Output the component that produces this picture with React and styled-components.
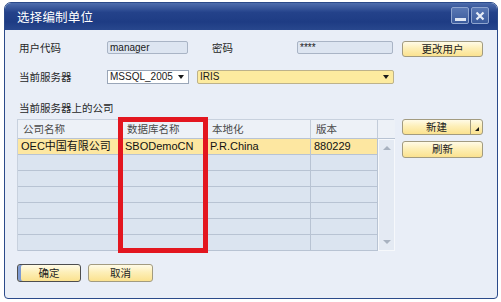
import styled, { createGlobalStyle } from "styled-components";

const GlobalStyle = createGlobalStyle`
  html, body {
    margin: 0;
    padding: 0;
    background: #ffffff;
  }
  body {
    font-family: "Liberation Sans", "Noto Sans CJK SC", sans-serif;
    font-size: 11px;
    color: #1a1a1a;
  }
`;

const companies = [
  { name: "OEC中国有限公司", db: "SBODemoCN", locale: "P.R.China", version: "880229" },
];
const EMPTY_ROWS = 6;

export default function App() {
  return (
    <>
      <GlobalStyle />
      <Window>
        <TitleBar>
          <Title>选择编制单位</Title>
          <Controls>
            <CtrlBox>
              <MinBar />
            </CtrlBox>
            <CtrlBox>
              <svg width="10" height="10" viewBox="0 0 10 10">
                <path d="M1.5 1.5 L8.5 8.5 M8.5 1.5 L1.5 8.5" stroke="#e8eef8" strokeWidth="2.2" />
              </svg>
            </CtrlBox>
          </Controls>
        </TitleBar>

        <Body>
          <Line $top={0}>
            <Fields>
              <Label>用户代码</Label>
              <ReadOnly $w={81}>manager</ReadOnly>
              <Label $w={87} $left={22}>密码</Label>
              <ReadOnly $w={96}>****</ReadOnly>
            </Fields>
            <Button>更改用户</Button>
          </Line>

          <Line $top={13}>
            <Fields>
              <Label $h={14}>当前服务器</Label>
              <Select>
                MSSQL_2005
                <Arrow />
              </Select>
              <YellowField>
                IRIS
                <Arrow />
              </YellowField>
            </Fields>
          </Line>

          <Line $top={17}>
            <Label $h={14}>当前服务器上的公司</Label>
          </Line>

          <Line $top={4}>
            <Table>
              <HeadCell>公司名称</HeadCell>
              <HeadCell>数据库名称</HeadCell>
              <HeadCell>本地化</HeadCell>
              <HeadCell>版本</HeadCell>
              <HeadCell $last />
              {companies.map((c) => (
                <>
                  <Cell key={c.db + "1"} $selected $col={1}>{c.name}</Cell>
                  <Cell key={c.db + "2"} $selected $col={2}>{c.db}</Cell>
                  <Cell key={c.db + "3"} $selected $col={3}>{c.locale}</Cell>
                  <Cell key={c.db + "4"} $selected $col={4}>{c.version}</Cell>
                </>
              ))}
              {Array.from({ length: EMPTY_ROWS }).map((_, i) => (
                <>
                  <Cell key={i + "a"} $col={1} />
                  <Cell key={i + "b"} $col={2} />
                  <Cell key={i + "c"} $col={3} />
                  <Cell key={i + "d"} $col={4} />
                </>
              ))}
              <Scrollbar>
                <ScrollArrow $up />
                <ScrollArrow />
              </Scrollbar>
              <RedMark />
            </Table>
            <SideButtons>
              <SplitButton>
                <span>新建</span>
                <SplitPart>
                  <Corner />
                </SplitPart>
              </SplitButton>
              <Button $h={17}>刷新</Button>
            </SideButtons>
          </Line>

          <Footer>
            <Button $w={64} $h={18} $focused>确定</Button>
            <Button $w={65} $h={18}>取消</Button>
          </Footer>
        </Body>
      </Window>
    </>
  );
}

const Window = styled.div`
  box-sizing: border-box;
  width: 494px;
  height: 297px;
  margin: 2px 0 0 4px;
  border: 1px solid #2b4a8a;
  border-radius: 7px 7px 4px 4px;
  background: #e9eef7;
  display: flex;
  flex-direction: column;
  overflow: hidden;
`;

const TitleBar = styled.div`
  height: 27px;
  flex: none;
  display: flex;
  align-items: flex-start;
  justify-content: space-between;
  padding: 0 8px 0 12px;
  background: linear-gradient(#4e6dad 0%, #24428a 35%, #1e3c84 70%, #28478d 100%);
`;

const Title = styled.div`
  font-family: "Noto Sans CJK SC", sans-serif;
  font-size: 12.5px;
  line-height: 27px;
  color: #ffffff;
  letter-spacing: 0.2px;
`;

const Controls = styled.div`
  display: flex;
  gap: 2px;
  margin-top: 4px;
`;

const CtrlBox = styled.div`
  box-sizing: border-box;
  width: 18px;
  height: 17px;
  border: 1px solid #8fa5cf;
  border-radius: 2px;
  background: linear-gradient(#5a78b4, #3a5a9c);
  display: flex;
  align-items: center;
  justify-content: center;
`;

const MinBar = styled.div`
  width: 11px;
  height: 3px;
  background: #e1e8f4;
  margin-top: 8px;
`;

const Body = styled.div`
  flex: 1;
  display: flex;
  flex-direction: column;
  padding: 11px 0 0 12px;
`;

const Line = styled.div`
  display: grid;
  grid-template-columns: 377px 81px;
  column-gap: 8px;
  align-items: start;
  margin-top: ${(p) => p.$top}px;
`;

const Fields = styled.div`
  display: flex;
  align-items: flex-start;
`;

const Label = styled.div`
  box-sizing: border-box;
  width: ${(p) => p.$w || 90}px;
  margin-left: ${(p) => p.$left || 0}px;
  padding-left: 2px;
  line-height: ${(p) => p.$h || 13}px;
  font-family: "Noto Sans CJK SC", sans-serif;
  font-size: 10.5px;
  color: #262626;
  white-space: nowrap;
`;

const ReadOnly = styled.div`
  box-sizing: border-box;
  width: ${(p) => p.$w}px;
  height: 13px;
  border: 1px solid #a9b4c5;
  border-radius: 2px;
  background: #dde5f1;
  padding-left: 2px;
  font-size: 10px;
  line-height: 11px;
  color: #1a1a1a;
`;

const Select = styled.div`
  box-sizing: border-box;
  position: relative;
  width: 82px;
  height: 14px;
  border: 1px solid #9aa6b8;
  background: #ffffff;
  padding-left: 2px;
  font-size: 10px;
  line-height: 12px;
`;

const YellowField = styled(Select)`
  width: 197px;
  margin-left: 8px;
  border-color: #bdb28a;
  border-radius: 2px;
  background: #fdeb9f;
`;

const Arrow = styled.span`
  position: absolute;
  right: 4px;
  top: 4px;
  width: 0;
  height: 0;
  border-left: 3.5px solid transparent;
  border-right: 3.5px solid transparent;
  border-top: 4px solid #1a1a1a;
`;

const Table = styled.div`
  position: relative;
  display: grid;
  grid-template-columns: 104px 85px 104px 67px 17px;
  grid-template-rows: 19px repeat(7, 16px);
  border-top: 1px solid #c8d1de;
  border-left: 1px solid #c8d1de;
`;

const HeadCell = styled.div`
  box-sizing: border-box;
  padding-left: 5px;
  border-right: ${(p) => (p.$last ? "none" : "1px solid #c3ccd9")};
  border-bottom: 1px solid #b8c3d3;
  background: #edf1f7;
  font-family: "Noto Sans CJK SC", sans-serif;
  font-size: 10.5px;
  line-height: 18px;
  color: #4a4a4a;
`;

const Cell = styled.div`
  box-sizing: border-box;
  padding-left: 3px;
  grid-column: ${(p) => p.$col};
  border-right: 1px solid #b8c3d3;
  border-bottom: 1px solid #b8c3d3;
  background: ${(p) => (p.$selected ? "#fde7a1" : "#dbe4f0")};
  font-size: 11px;
  line-height: 15px;
  white-space: nowrap;
  overflow: hidden;
  color: #111;
`;

const Scrollbar = styled.div`
  grid-column: 5;
  grid-row: 2 / span 7;
  box-sizing: border-box;
  border: 1px solid #f6f8fb;
  background: #e4eaf3;
  display: flex;
  flex-direction: column;
  justify-content: space-between;
  align-items: center;
  padding: 6px 0 6px;
`;

const ScrollArrow = styled.span`
  width: 0;
  height: 0;
  border-left: 4px solid transparent;
  border-right: 4px solid transparent;
  ${(p) =>
    p.$up
      ? "border-bottom: 4px solid #a8b2c0;"
      : "border-top: 4px solid #a8b2c0;"}
`;

const RedMark = styled.div`
  position: absolute;
  box-sizing: border-box;
  left: 100px;
  top: -3px;
  width: 90px;
  height: 136px;
  border: 5px solid #e3161f;
  pointer-events: none;
`;

const SideButtons = styled.div`
  display: flex;
  flex-direction: column;
  gap: 6px;
`;

const Button = styled.button`
  box-sizing: border-box;
  width: ${(p) => (p.$w ? `${p.$w}px` : "100%")};
  height: ${(p) => p.$h || 16}px;
  padding: 0;
  border: 1px solid ${(p) => (p.$focused ? "#4e4e4e" : "#a29b80")};
  border-radius: 3px;
  background: linear-gradient(#fffbe7 0%, #fdefb8 45%, #fbe28f 100%);
  box-shadow: ${(p) => (p.$focused ? "inset 3px 0 0 #7d9ad2" : "none")};
  font-family: "Noto Sans CJK SC", sans-serif;
  font-size: 10.5px;
  line-height: 1;
  color: #222;
`;

const SplitButton = styled(Button)`
  display: flex;
  align-items: stretch;
  span {
    flex: 1;
    display: flex;
    align-items: center;
    justify-content: center;
  }
`;

const SplitPart = styled.div`
  width: 11px;
  border-left: 1px solid #a29b80;
  position: relative;
`;

const Corner = styled.div`
  position: absolute;
  right: 3px;
  bottom: 3px;
  width: 0;
  height: 0;
  border-left: 4px solid transparent;
  border-bottom: 4px solid #1a1a1a;
`;

const Footer = styled.div`
  display: flex;
  gap: 7px;
  margin-top: 13px;
`;
